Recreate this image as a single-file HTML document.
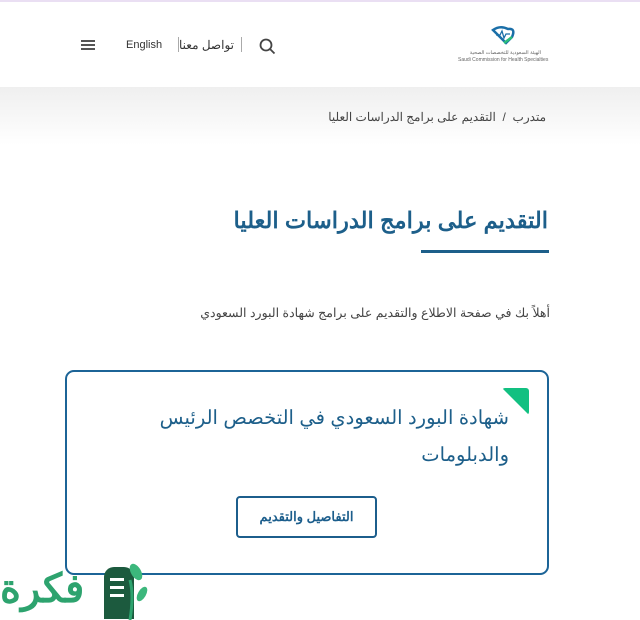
<!DOCTYPE html>
<html><head><meta charset="utf-8"><style>
body{margin:0;width:640px;height:620px;background:#fff;font-family:"Liberation Sans","Noto Sans CJK SC",sans-serif;position:relative;overflow:hidden}
.a{position:absolute}
.ar{direction:rtl;white-space:nowrap}
</style></head><body>
<div class="a" style="left:0;top:0;width:640px;height:2px;background:#eadff3"></div>
<div class="a" style="left:81px;top:40px;width:14px;height:2px;background:#555;box-shadow:0 4px 0 #555,0 8px 0 #555"></div>
<div class="a" style="left:126px;top:39px;font-size:11px;color:#333">English</div>
<div class="a" style="left:178px;top:37px;width:1px;height:15px;background:#aaa"></div>
<div class="a ar" style="left:186px;top:38px;width:48px;font-size:12px;color:#333">تواصل معنا</div>
<div class="a" style="left:241px;top:37px;width:1px;height:15px;background:#aaa"></div>
<svg class="a" style="left:259px;top:38px" width="17" height="17"><circle cx="7" cy="7" r="5.5" fill="none" stroke="#444" stroke-width="1.8"/><line x1="11" y1="11" x2="15.5" y2="15.5" stroke="#444" stroke-width="1.8"/></svg>
<svg class="a" style="left:488px;top:25px" width="30" height="22"><path d="M5 5 Q12 0 20 4 Q28 3 24 12 L18 18 Z" fill="none" stroke="#1b6fa8" stroke-width="2.5"/><path d="M8 10 L12 10 L14 6 L16 13 L18 9 L22 9" fill="none" stroke="#1b6fa8" stroke-width="1.3"/><path d="M16 18 L24 12" stroke="#2bbf7a" stroke-width="2.5"/></svg>
<div class="a ar" style="right:99px;top:50px;font-size:5px;color:#666">الهيئة السعودية للتخصصات الصحية</div>
<div class="a" style="left:458px;top:57px;font-size:5px;color:#666;white-space:nowrap">Saudi Commission for Health Specialties</div>
<div class="a" style="left:0;top:87px;width:640px;height:58px;background:linear-gradient(#efefef,#fff)"></div>
<div class="a ar" style="right:94px;top:110px;font-size:12px;color:#444">متدرب &nbsp;/&nbsp; التقديم على برامج الدراسات العليا</div>
<div class="a ar" style="right:92px;top:208px;font-size:22.5px;font-weight:bold;color:#1d5f8a">التقديم على برامج الدراسات العليا</div>
<div class="a" style="left:421px;top:250px;width:128px;height:3px;background:#1d5f8a"></div>
<div class="a ar" style="right:90px;top:305px;font-size:12.5px;color:#444">أهلاً بك في صفحة الاطلاع والتقديم على برامج شهادة البورد السعودي</div>
<div class="a" style="left:65px;top:370px;width:480px;height:201px;border:2px solid #1c6497;border-radius:9px"></div>
<div class="a" style="left:502px;top:388px;width:0;height:0;border-top:27px solid #12c081;border-left:27px solid transparent;border-radius:3px"></div>
<div class="a" style="right:131px;top:400px;width:370px;direction:rtl;font-size:19.5px;line-height:37px;color:#1d5f8a">شهادة البورد السعودي في التخصص الرئيس والدبلومات</div>
<div class="a" style="left:236px;top:496px;width:137px;height:38px;border:2px solid #1c5e8c;border-radius:4px;text-align:center;line-height:38px;font-size:13px;font-weight:bold;color:#1c5e8c;direction:rtl">التفاصيل والتقديم</div>
<div class="a ar" style="left:0;top:562px;font-size:40px;font-weight:bold;color:#2da36e;line-height:55px">فكرة</div>
<div class="a" style="left:104px;top:567px;width:30px;height:52px;background:#1c5a3e;border-radius:10px 10px 0 0"></div>
<div class="a" style="left:110px;top:578px;width:14px;height:3px;background:#fff;box-shadow:0 8px 0 #fff,0 16px 0 #fff"></div>
<svg class="a" style="left:122px;top:560px" width="30" height="60"><path d="M8 60 Q12 35 8 20" stroke="#2da36e" stroke-width="3" fill="none"/><ellipse cx="14" cy="12" rx="5" ry="9" fill="#3cb77c" transform="rotate(-30 14 12)"/><ellipse cx="20" cy="34" rx="4" ry="8" fill="#3cb77c" transform="rotate(30 20 34)"/></svg>
</body></html>
